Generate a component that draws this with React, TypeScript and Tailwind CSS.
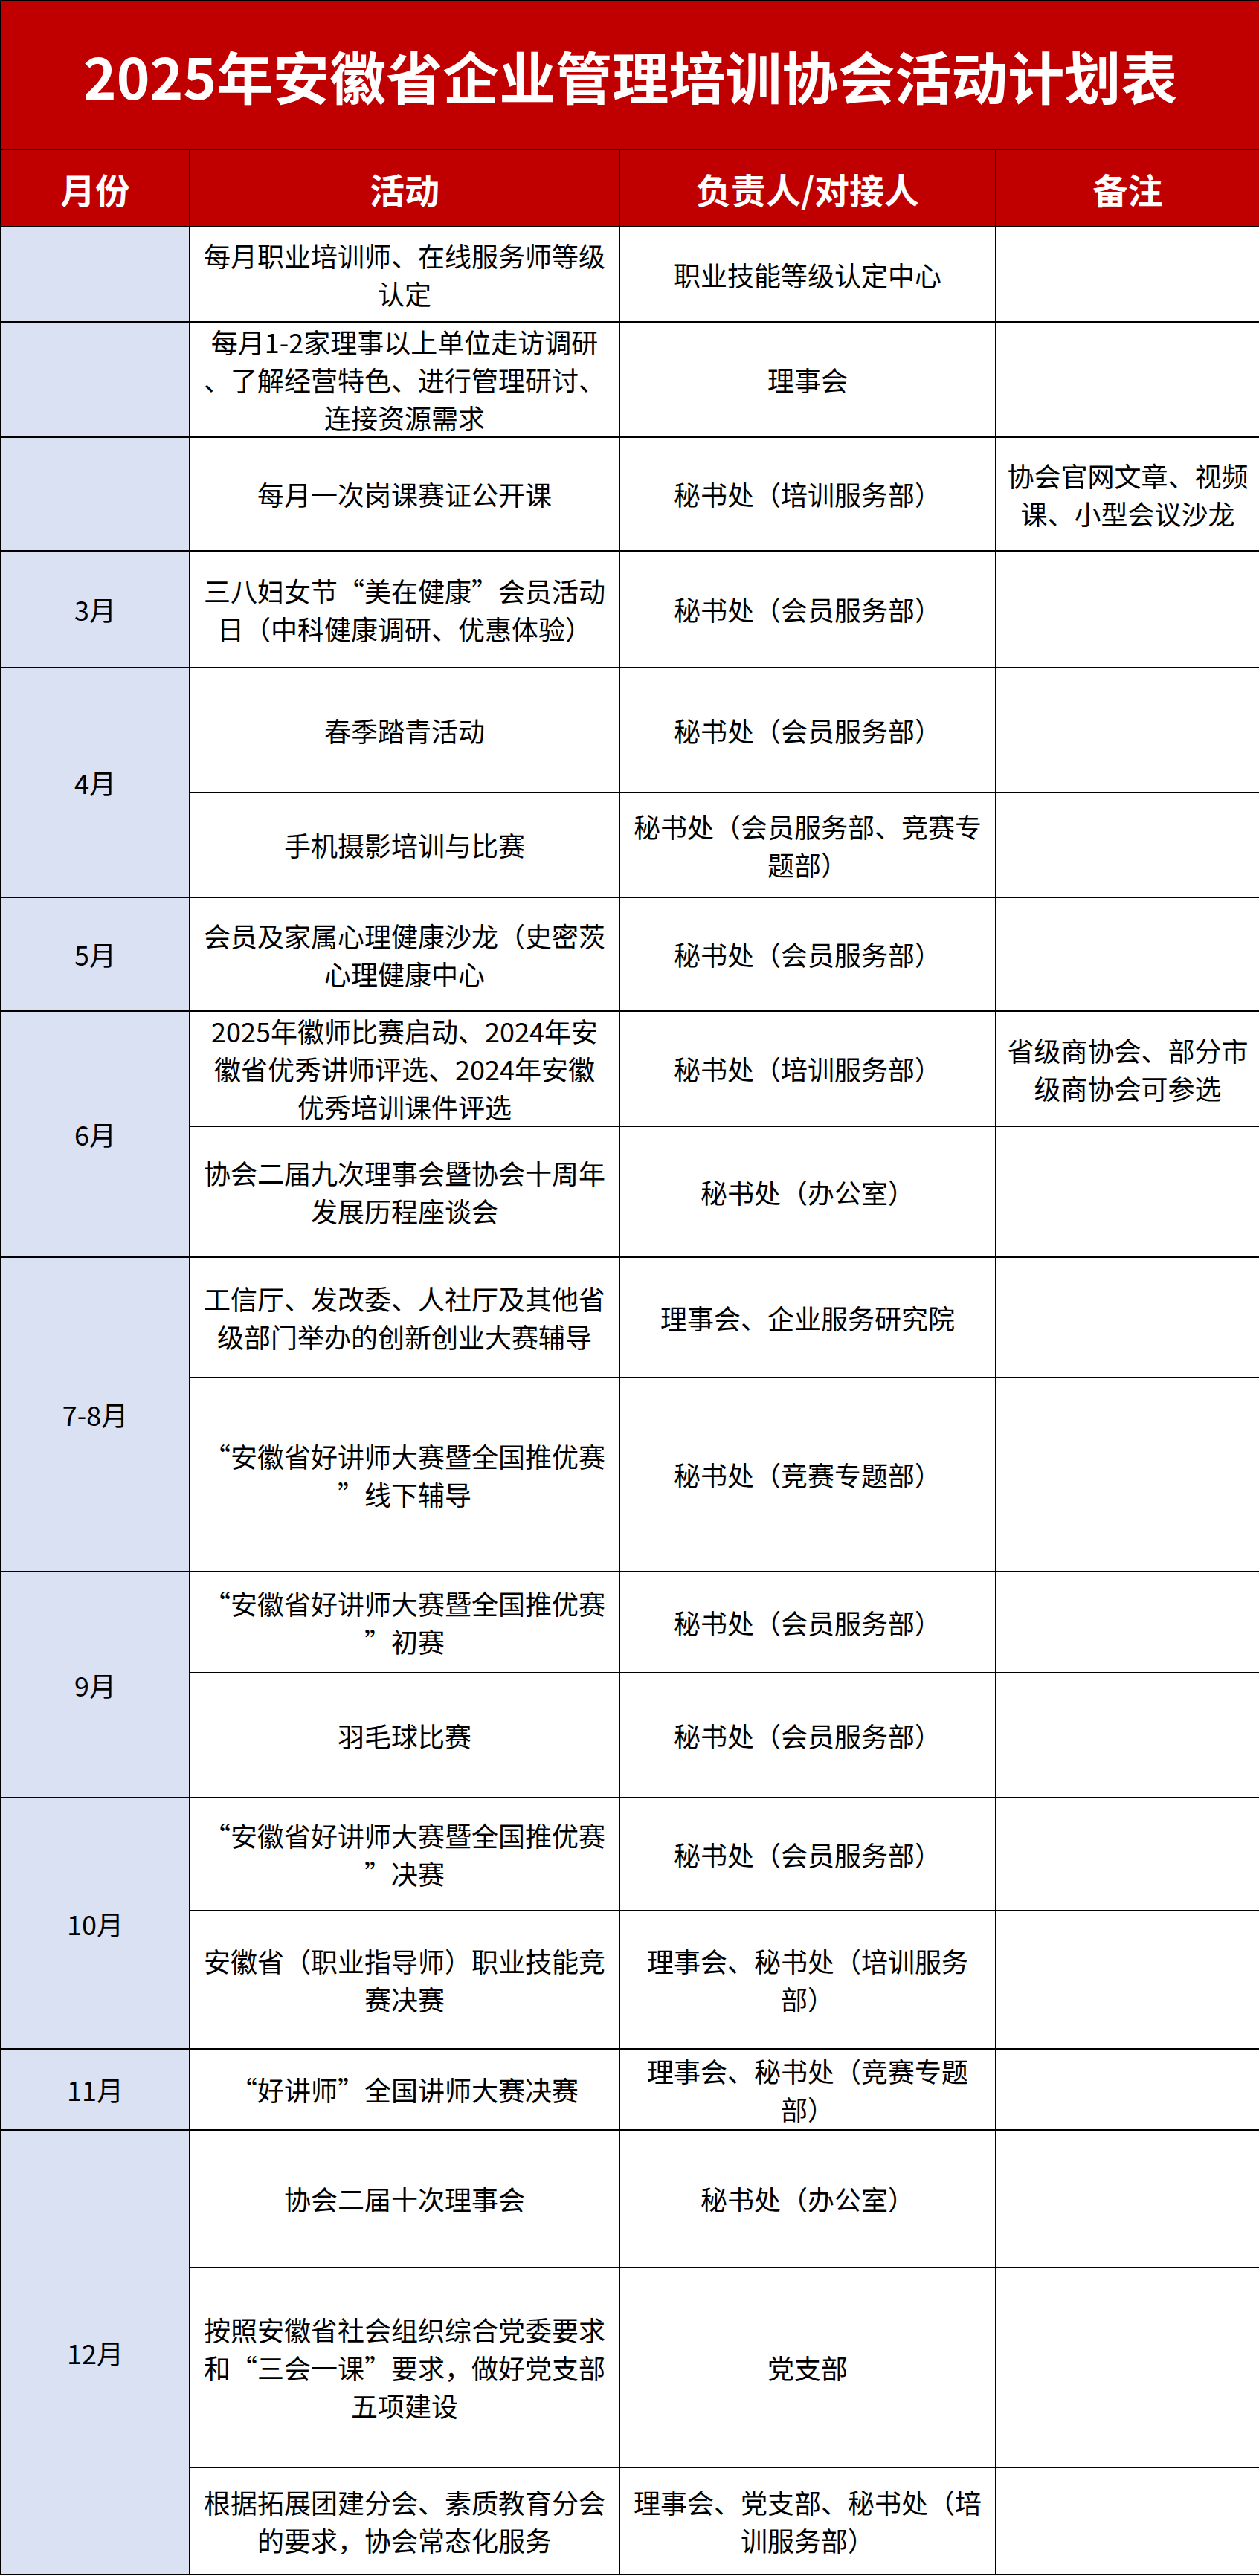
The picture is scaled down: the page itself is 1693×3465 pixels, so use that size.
type Month = { label: string; span: number } | null;

interface PlanRow {
  month: Month;
  act: string[];
  owner: string[];
  note?: string[];
  h: string;
}

const ROWS: PlanRow[] = [
  { month: { label: "", span: 1 }, act: ["每月职业培训师、在线服务师等级", "认定"], owner: ["职业技能等级认定中心"], h: "h-[128px]" },
  { month: { label: "", span: 1 }, act: ["每月1-2家理事以上单位走访调研", "、了解经营特色、进行管理研讨、", "连接资源需求"], owner: ["理事会"], h: "h-[153px]" },
  { month: { label: "", span: 1 }, act: ["每月一次岗课赛证公开课"], owner: ["秘书处（培训服务部）"], note: ["协会官网文章、视频", "课、小型会议沙龙"], h: "h-[153px]" },
  { month: { label: "3月", span: 1 }, act: ["三八妇女节“美在健康”会员活动", "日（中科健康调研、优惠体验）"], owner: ["秘书处（会员服务部）"], h: "h-[157px]" },
  { month: { label: "4月", span: 2 }, act: ["春季踏青活动"], owner: ["秘书处（会员服务部）"], h: "h-[168px]" },
  { month: null, act: ["手机摄影培训与比赛"], owner: ["秘书处（会员服务部、竞赛专", "题部）"], h: "h-[141px]" },
  { month: { label: "5月", span: 1 }, act: ["会员及家属心理健康沙龙（史密茨", "心理健康中心"], owner: ["秘书处（会员服务部）"], h: "h-[153px]" },
  { month: { label: "6月", span: 2 }, act: ["2025年徽师比赛启动、2024年安", "徽省优秀讲师评选、2024年安徽", "优秀培训课件评选"], owner: ["秘书处（培训服务部）"], note: ["省级商协会、部分市", "级商协会可参选"], h: "h-[153px]" },
  { month: null, act: ["协会二届九次理事会暨协会十周年", "发展历程座谈会"], owner: ["秘书处（办公室）"], h: "h-[176px]" },
  { month: { label: "7-8月", span: 2 }, act: ["工信厅、发改委、人社厅及其他省", "级部门举办的创新创业大赛辅导"], owner: ["理事会、企业服务研究院"], h: "h-[162px]" },
  { month: null, act: ["“安徽省好讲师大赛暨全国推优赛", "”线下辅导"], owner: ["秘书处（竞赛专题部）"], h: "h-[261px]" },
  { month: { label: "9月", span: 2 }, act: ["“安徽省好讲师大赛暨全国推优赛", "”初赛"], owner: ["秘书处（会员服务部）"], h: "h-[136px]" },
  { month: null, act: ["羽毛球比赛"], owner: ["秘书处（会员服务部）"], h: "h-[168px]" },
  { month: { label: "10月", span: 2 }, act: ["“安徽省好讲师大赛暨全国推优赛", "”决赛"], owner: ["秘书处（会员服务部）"], h: "h-[152px]" },
  { month: null, act: ["安徽省（职业指导师）职业技能竞", "赛决赛"], owner: ["理事会、秘书处（培训服务", "部）"], h: "h-[186px]" },
  { month: { label: "11月", span: 1 }, act: ["“好讲师”全国讲师大赛决赛"], owner: ["理事会、秘书处（竞赛专题", "部）"], h: "h-[109px]" },
  { month: { label: "12月", span: 3 }, act: ["协会二届十次理事会"], owner: ["秘书处（办公室）"], h: "h-[185px]" },
  { month: null, act: ["按照安徽省社会组织综合党委要求", "和“三会一课”要求，做好党支部", "五项建设"], owner: ["党支部"], h: "h-[269px]" },
  { month: null, act: ["根据拓展团建分会、素质教育分会", "的要求，协会常态化服务"], owner: ["理事会、党支部、秘书处（培", "训服务部）"], h: "h-[144px]" },
];

function Lines({ lines }: { lines?: string[] }) {
  if (!lines || lines.length === 0) return null;
  return (
    <>
      {lines.map((l, i) => (
        <span key={i}>
          {i > 0 && <br />}
          {l}
        </span>
      ))}
    </>
  );
}

const cell = "border-2 border-black text-center align-middle px-1 whitespace-nowrap";

export default function App() {
  return (
    <div className="w-[1693px] bg-white text-black" style={{ fontFamily: '"Noto Sans CJK SC", "Noto Sans", sans-serif' }}>
      <table className="w-[1693px] table-fixed border-collapse">
        <colgroup>
          <col className="w-[254px]" />
          <col className="w-[578px]" />
          <col className="w-[506px]" />
          <col className="w-[355px]" />
        </colgroup>
        <tbody>
          {/* Title */}
          <tr className="h-[200px]">
            <td colSpan={4} className="border-2 border-black bg-[#c00000] text-center align-middle text-white text-[76px] font-bold leading-none">
              2025年安徽省企业管理培训协会活动计划表
            </td>
          </tr>

          {/* Column headers */}
          <tr className="h-[104px] bg-[#c00000] text-white text-[47px] font-bold leading-none">
            <td className={cell}>月份</td>
            <td className={cell}>活动</td>
            <td className={cell}>负责人/对接人</td>
            <td className={cell}>备注</td>
          </tr>

          {ROWS.map((row, idx) => (
            <tr key={idx} className={`${row.h} text-[36px] leading-[51px]`}>
              {row.month && (
                <td rowSpan={row.month.span} className={`${cell} bg-[#d9e1f2]`}>
                  {row.month.label}
                </td>
              )}
              <td className={cell}>
                <Lines lines={row.act} />
              </td>
              <td className={cell}>
                <Lines lines={row.owner} />
              </td>
              <td className={cell}>
                <Lines lines={row.note} />
              </td>
            </tr>
          ))}
        </tbody>
      </table>
    </div>
  );
}
